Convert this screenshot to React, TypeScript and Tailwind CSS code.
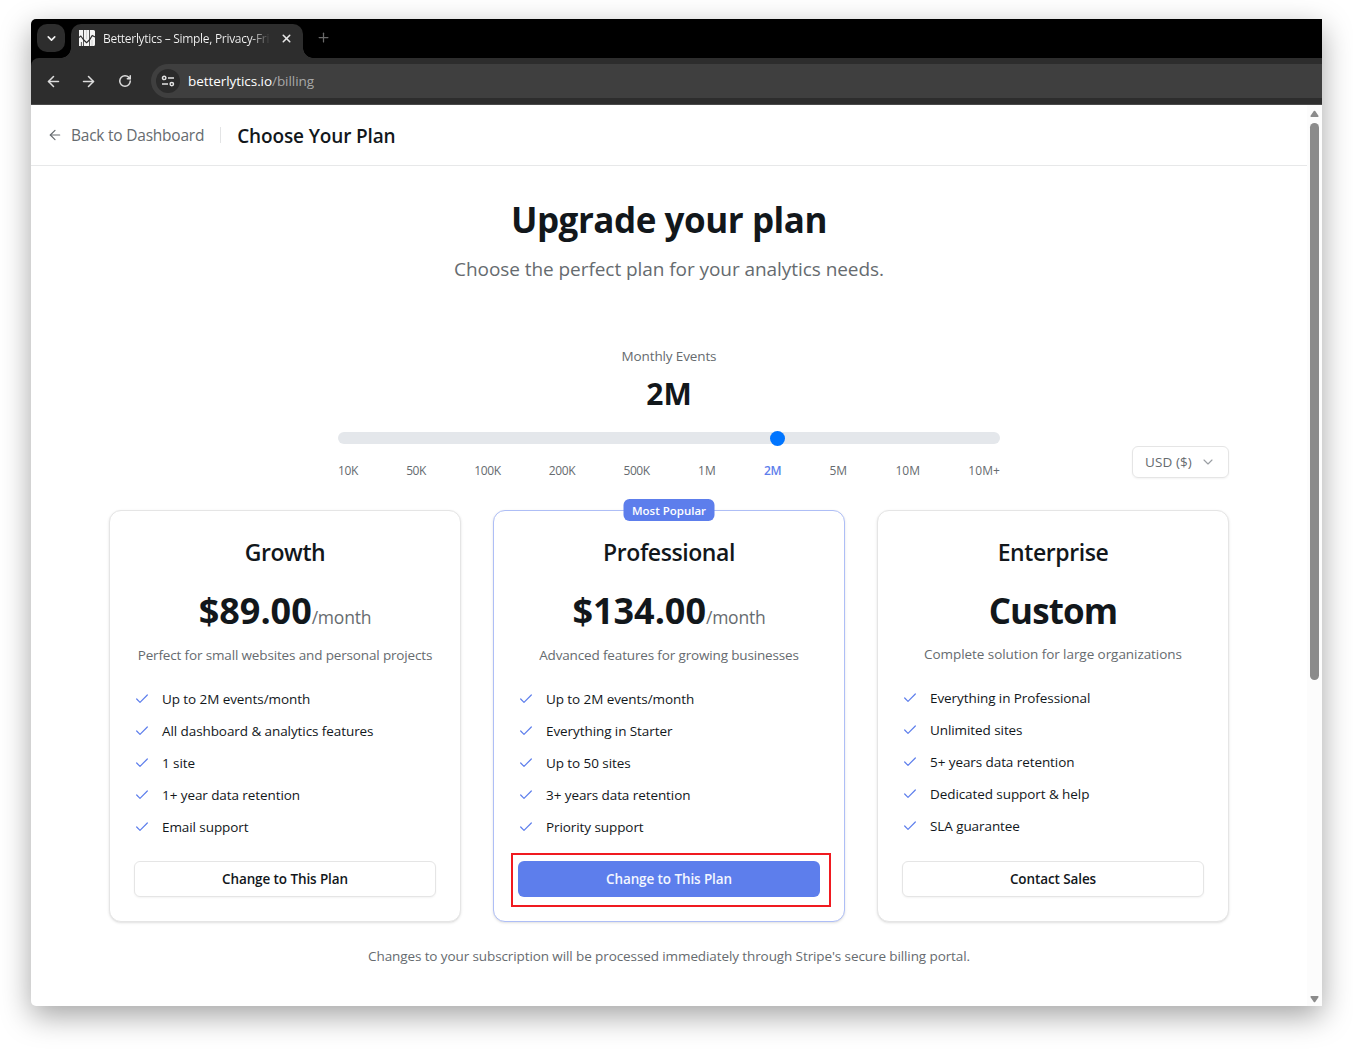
import React from "react";
import { ArrowLeft, ArrowRight, Check, ChevronDown, Plus, RotateCw, X } from "lucide-react";

type Plan = {
  name: string;
  price: string;
  period?: string;
  description: string;
  features: string[];
  action: string;
  popular?: boolean;
};

const plans: Plan[] = [
  {
    name: "Growth",
    price: "$89.00",
    period: "/month",
    description: "Perfect for small websites and personal projects",
    features: [
      "Up to 2M events/month",
      "All dashboard & analytics features",
      "1 site",
      "1+ year data retention",
      "Email support",
    ],
    action: "Change to This Plan",
  },
  {
    name: "Professional",
    price: "$134.00",
    period: "/month",
    description: "Advanced features for growing businesses",
    features: [
      "Up to 2M events/month",
      "Everything in Starter",
      "Up to 50 sites",
      "3+ years data retention",
      "Priority support",
    ],
    action: "Change to This Plan",
    popular: true,
  },
  {
    name: "Enterprise",
    price: "Custom",
    description: "Complete solution for large organizations",
    features: [
      "Everything in Professional",
      "Unlimited sites",
      "5+ years data retention",
      "Dedicated support & help",
      "SLA guarantee",
    ],
    action: "Contact Sales",
  },
];

const ranges = ["10K", "50K", "100K", "200K", "500K", "1M", "2M", "5M", "10M", "10M+"];

function Favicon() {
  return (
    <svg width="16" height="16" viewBox="0 0 16 16" className="shrink-0">
      <path d="M0 0h4.2v16H0zM5 0h5.2v16H5zM11 0h3.5a1.5 1.5 0 0 1 1.5 1.5v13a1.5 1.5 0 0 1-1.5 1.5H11z" fill="#f4f4f4" />
      <path d="M7.5 0v9M13 10v6" stroke="#d4d4d4" strokeWidth="1.2" />
      <path d="M0 7.5 1.8 6l3 4 2.8 2.6 3-2.8 2.6-4.3L16 7" stroke="#2d2d2d" strokeWidth="1.2" fill="none" />
      <path d="M2.4 16v-4" stroke="#2d2d2d" strokeWidth="0.8" />
    </svg>
  );
}

function TuneIcon() {
  return (
    <svg width="14" height="14" viewBox="0 0 14 14" fill="none" stroke="#e3e3e3" strokeWidth="1.5">
      <circle cx="3.2" cy="3.9" r="1.7" />
      <path d="M7 3.9h6M1 10.1h6" />
      <circle cx="10.8" cy="10.1" r="1.7" />
    </svg>
  );
}

function BrowserChrome() {
  return (
    <div className="shrink-0 bg-black">
      <div className="flex h-[39px] pl-[6px] pt-[5px]">
        <div className="flex size-7 items-center justify-center rounded-[10px] bg-[#2d2d2d]">
          <ChevronDown size={13} strokeWidth={3} color="#f0f0f0" />
        </div>
        <div className="relative ml-[6px] flex h-[34px] w-[232px] items-center rounded-t-[10px] bg-[#2d2d2d] pb-[6px] pl-2">
          <span className="absolute -left-2.5 bottom-0 size-2.5 bg-[radial-gradient(circle_at_0_0,transparent_9.5px,#2d2d2d_10px)]" />
          <span className="absolute -right-2.5 bottom-0 size-2.5 bg-[radial-gradient(circle_at_100%_0,transparent_9.5px,#2d2d2d_10px)]" />
          <Favicon />
          <span className="ml-2 w-[168px] overflow-hidden whitespace-nowrap bg-linear-to-r from-[#f5f5f5] from-88% to-[#2d2d2d] bg-clip-text pt-px text-[12px] tracking-[-0.3px] text-transparent">
            Betterlytics – Simple, Privacy-Fri
          </span>
          <X size={13} strokeWidth={2.8} color="#e8e8e8" className="ml-[9px]" />
        </div>
        <Plus size={15} strokeWidth={2} color="#6a6a6a" className="ml-[13px] mt-[6px]" />
      </div>
      <div className="flex h-[47px] items-center rounded-tl-lg border-b border-[#4a4a4a] bg-[#2d2d2d] pl-[14px]">
        <ArrowLeft size={17} strokeWidth={2.2} color="#dcdcdc" />
        <ArrowRight size={17} strokeWidth={2.2} color="#dcdcdc" className="ml-[18px]" />
        <RotateCw size={14} strokeWidth={2.6} color="#dcdcdc" className="ml-[21px]" />
        <div className="ml-[19px] flex h-[34px] flex-1 items-center rounded-l-full bg-[#3f3f3f] pl-[5px]">
          <div className="flex size-6 items-center justify-center rounded-full bg-[#2b2b2b]">
            <TuneIcon />
          </div>
          <span className="ml-2 text-[13.5px] tracking-[-0.06px] text-white">
            betterlytics.io<span className="text-[#a8a8a8]">/billing</span>
          </span>
        </div>
      </div>
    </div>
  );
}

function PlanCard({ plan }: { plan: Plan }) {
  return (
    <div
      className={`relative flex h-[412px] flex-col rounded-xl border bg-white px-6 pb-6 pt-[25px] shadow-sm ${
        plan.popular ? "border-[#aebef6]" : "border-[#e5e5e5]"
      }`}
    >
      {plan.popular && (
        <span className="absolute -top-3 left-1/2 flex h-[22px] w-[91px] -translate-x-1/2 items-center justify-center whitespace-nowrap rounded-md bg-[#5d7eec] pt-px text-[11.5px] font-semibold text-white">
          Most Popular
        </span>
      )}
      <h3 className="text-center text-[23px] font-semibold leading-8 tracking-[-0.42px]">{plan.name}</h3>
      <div
        className={`mt-[23px] flex items-baseline justify-center leading-10 ${plan.period ? "h-[41px]" : "h-10"}`}
      >
        <span
          className={`font-bold ${plan.period ? "text-[36px] tracking-[-0.05px]" : "text-[35px] tracking-[-0.9px]"}`}
        >
          {plan.price}
        </span>
        {plan.period && <span className="text-[17.5px] tracking-[-0.22px] text-[#666b6f]">{plan.period}</span>}
      </div>
      <p
        className={`mt-[13px] whitespace-nowrap text-center text-[13.5px] leading-5 text-[#666b6f] ${
          plan.period ? "tracking-[-0.15px]" : "tracking-[-0.06px]"
        }`}
      >
        {plan.description}
      </p>
      <ul className="mt-6 flex flex-col gap-3">
        {plan.features.map((feature) => (
          <li key={feature} className="flex items-center gap-3 text-[13.5px] leading-5 tracking-[-0.08px]">
            <Check size={16} strokeWidth={1.8} color="#5d7eec" />
            {feature}
          </li>
        ))}
      </ul>
      <div className="relative mt-auto">
        <button
          className={`block h-9 w-full rounded-md text-[13.5px] font-semibold tracking-[-0.1px] ${
            plan.popular ? "bg-[#5d7eec] text-[#f3f6ff]" : "border border-[#e5e5e5] bg-white shadow-xs"
          }`}
        >
          {plan.action}
        </button>
        {plan.popular && (
          <span className="pointer-events-none absolute -bottom-2.5 -left-[7px] -right-[11px] -top-2 border-2 border-[#f01a20]" />
        )}
      </div>
    </div>
  );
}

function BillingPage() {
  return (
    <div className="flex-1">
      <header className="flex h-[61px] items-center border-b border-[#e7e8e9] pl-4">
        <ArrowLeft size={16} strokeWidth={1.8} color="#666b6f" />
        <span className="ml-2 pt-0.5 text-[15.5px] tracking-[-0.23px] text-[#666b6f]">Back to Dashboard</span>
        <span className="ml-4 h-4 w-px bg-[#e3e4e5]" />
        <h1 className="ml-4 pt-0.5 text-[19px] font-semibold tracking-[-0.14px]">Choose Your Plan</h1>
      </header>
      <main className="mx-auto flex w-[1120px] flex-col pt-[34px]">
        <h2 className="text-center text-[35px] font-bold leading-10 tracking-[-0.45px]">Upgrade your plan</h2>
        <p className="mt-[15px] text-center text-[19px] leading-7 tracking-[-0.06px] text-[#666b6f]">
          Choose the perfect plan for your analytics needs.
        </p>
        <div className="mx-auto mt-[63px] flex h-[133px] w-[662px] flex-col text-center">
          <p className="text-[13.5px] leading-5 tracking-[-0.13px] text-[#666b6f]">Monthly Events</p>
          <p className="mt-2.5 text-[30px] font-bold leading-9">2M</p>
          <div className="relative mt-5 h-3 rounded-full bg-[#e4e7eb]">
            <span className="absolute -top-[1.5px] left-[431.5px] size-[15px] rounded-full bg-[#0075ff]" />
          </div>
          <div className="mt-[19px] flex justify-between text-[12px] leading-4 text-[#666b6f]">
            {ranges.map((r) => (
              <span
                key={r}
                className={
                  r === "2M"
                    ? "font-semibold tracking-[-0.4px] text-[#5d7eec]"
                    : r.endsWith("K")
                      ? "tracking-[-0.4px]"
                      : "tracking-[0.05px]"
                }
              >
                {r}
              </span>
            ))}
          </div>
        </div>
        <button className="-mt-[33px] flex h-8 w-[97px] items-center self-end rounded-md border border-[#e5e5e5] pl-3 text-[13.5px] tracking-[0.1px] text-[#666b6f] shadow-xs">
          USD ($)
          <ChevronDown size={16} strokeWidth={1.7} color="#9a9ea3" className="ml-2" />
        </button>
        <div className="mt-8 grid grid-cols-3 gap-8">
          {plans.map((plan) => (
            <PlanCard key={plan.name} plan={plan} />
          ))}
        </div>
        <p className="mt-6 text-center text-[13.5px] leading-5 tracking-[-0.1px] text-[#666b6f]">
          Changes to your subscription will be processed immediately through Stripe's secure billing portal.
        </p>
      </main>
    </div>
  );
}

function Scrollbar() {
  return (
    <div className="flex w-[15px] flex-col items-center bg-[#fcfcfc] pb-[3px] pt-[5px]">
      <svg width="9" height="8" viewBox="0 0 10 8" fill="#8b8b8b">
        <path d="M4.2.8a1 1 0 0 1 1.6 0L9.4 6a.8.8 0 0 1-.7 1.3H1.3A.8.8 0 0 1 .6 6Z" />
      </svg>
      <span className="mt-[5px] h-[557px] w-[9px] rounded-full bg-[#8b8b8b]" />
      <svg width="9" height="8" viewBox="0 0 10 8" fill="#8b8b8b" className="mt-auto">
        <path d="M4.2 7.2a1 1 0 0 0 1.6 0L9.4 2A.8.8 0 0 0 8.7.7H1.3A.8.8 0 0 0 .6 2Z" />
      </svg>
    </div>
  );
}

export default function App() {
  return (
    <div className="h-[1049px] w-[1353px] overflow-hidden bg-white pl-[31px] pt-[19px] font-['Open_Sans','Noto_Sans',sans-serif] text-[#12171b]">
      <div className="flex h-[987px] w-[1291px] flex-col overflow-hidden rounded-l-[5px] bg-white shadow-[0_10px_30px_rgba(0,0,0,0.36)]">
        <BrowserChrome />
        <div className="flex flex-1">
          <BillingPage />
          <Scrollbar />
        </div>
      </div>
    </div>
  );
}
